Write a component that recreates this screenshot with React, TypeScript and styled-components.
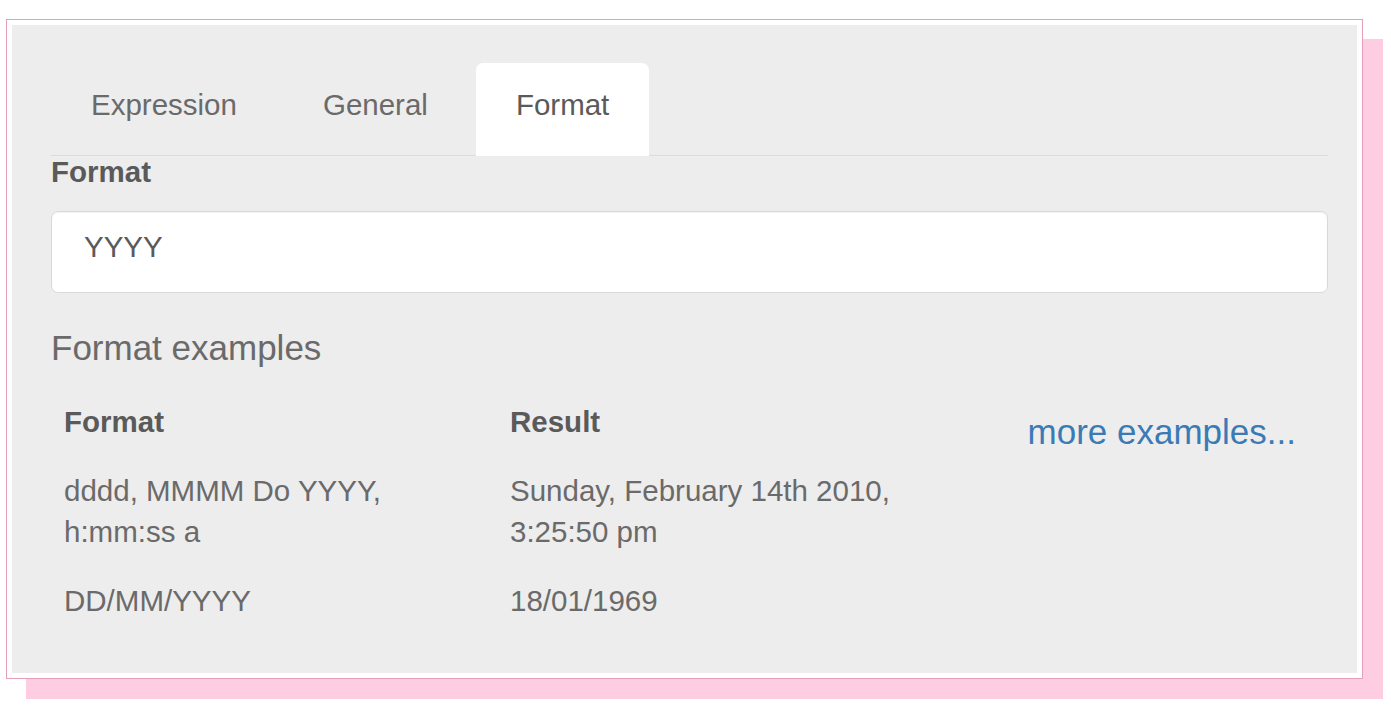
import { Fragment } from "react";
import styled, { createGlobalStyle } from "styled-components";

const GlobalStyle = createGlobalStyle`
  body {
    margin: 0;
    padding-bottom: 28px;
    background: #fff;
    font-family: "Liberation Sans", Arial, sans-serif;
  }
`;

const Frame = styled.div`
  margin: 19px 0 0 6px;
  width: 1357px;
  box-sizing: border-box;
  border: 1px solid #e69fbb;
  padding: 5px;
  background: #fff;
  box-shadow: 20px 20px 0 #fecde2;
`;

const Panel = styled.div`
  height: 648px;
  box-sizing: border-box;
  background: #ededed;
  padding: 38px 29px 0 39px;
  color: #6a6a6a;
  font-size: 29.5px;
`;

const Tabs = styled.ul`
  display: flex;
  margin: 0;
  padding: 0;
  list-style: none;
  border-bottom: 1px solid #dcdcdc;
`;

const Tab = styled.li<{ $active?: boolean }>`
  height: 93px;
  margin: 0 6px -1px 0;
  padding: 21px 40px 0;
  box-sizing: border-box;
  line-height: 41px;
  border-radius: 7px 7px 0 0;
  color: ${(p) => (p.$active ? "#5a5a5a" : "#6a6a6a")};
  background: ${(p) => (p.$active ? "#fff" : "transparent")};
  &:nth-child(2) {
    margin-right: 8px;
  }
`;

const Label = styled.div`
  font-weight: bold;
  color: #5a5a5a;
  line-height: 32px;
`;

const Input = styled.input`
  display: block;
  width: 100%;
  height: 82px;
  margin-top: 23px;
  box-sizing: border-box;
  padding: 0 32px 11px;
  border: 1px solid #d9d9d9;
  border-radius: 7px;
  box-shadow: inset 0 1px 1px rgba(0, 0, 0, 0.05);
  background: #fff;
  font-family: inherit;
  font-size: 29.5px;
  color: #5a5a5a;
  outline: none;
`;

const Heading = styled.h4`
  margin: 36px 0 0;
  font-size: 35px;
  font-weight: normal;
  line-height: 38px;
  color: #6a6a6a;
`;

const Examples = styled.div`
  display: grid;
  grid-template-columns: 446px 446px 1fr;
  row-gap: 27px;
  margin-top: 34px;
  line-height: 41.5px;
`;

const Cell = styled.div<{ $head?: boolean }>`
  padding: 0 13px;
  font-weight: ${(p) => (p.$head ? "bold" : "normal")};
  color: ${(p) => (p.$head ? "#5a5a5a" : "#6a6a6a")};
`;

const More = styled.a`
  grid-column: 3;
  grid-row: 1 / span 3;
  justify-self: end;
  align-self: start;
  padding: 12px 32px 0 0;
  font-size: 35px;
  line-height: 38px;
  color: #3a7bb6;
  text-decoration: none;
`;

const rows = [
  { format: "dddd, MMMM Do YYYY, h:mm:ss a", result: "Sunday, February 14th 2010, 3:25:50 pm" },
  { format: "DD/MM/YYYY", result: "18/01/1969" },
];

export default function App() {
  return (
    <>
      <GlobalStyle />
      <Frame>
        <Panel>
          <Tabs>
            <Tab>Expression</Tab>
            <Tab>General</Tab>
            <Tab $active>Format</Tab>
          </Tabs>
          <Label>Format</Label>
          <Input readOnly value="YYYY" />
          <Heading>Format examples</Heading>
          <Examples>
            <Cell $head>Format</Cell>
            <Cell $head>Result</Cell>
            <More href="#">more examples...</More>
            {rows.map((r) => (
              <Fragment key={r.format}>
                <Cell>{r.format}</Cell>
                <Cell>{r.result}</Cell>
              </Fragment>
            ))}
          </Examples>
        </Panel>
      </Frame>
    </>
  );
}
